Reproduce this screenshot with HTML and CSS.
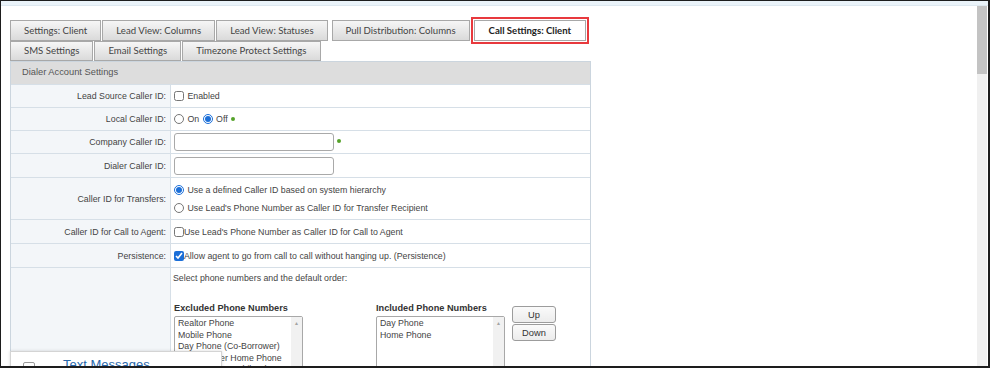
FILE: index.html
```html
<!DOCTYPE html>
<html>
<head>
    <title>Call Settings: Client</title>
    <link rel="stylesheet" href="styles.css">
</head>
<body>
    <div class="window">
        <div class="topbar"></div>
        <div class="viewport">
            <div class="page">
                <div class="tabs first">
                    <div class="tab">Settings: Client</div>
                    <div class="tab">Lead View: Columns</div>
                    <div class="tab">Lead View: Statuses</div>
                    <div class="tab spaced">Pull Distribution: Columns</div>
                    <div class="tab spaced active">Call Settings: Client</div>
                </div>
                <div class="tabs">
                    <div class="tab">SMS Settings</div>
                    <div class="tab">Email Settings</div>
                    <div class="tab">Timezone Protect Settings</div>
                </div>

                <div class="panel">
                    <div class="panel-header">Dialer Account Settings</div>
                    <table class="settings">
                        <tr class="h23">
                            <td class="label">Lead Source Caller ID:</td>
                            <td class="value"><label><input type="checkbox"> Enabled</label></td>
                        </tr>
                        <tr class="h23">
                            <td class="label">Local Caller ID:</td>
                            <td class="value">
                                <label><input type="radio" name="local"> On</label>
                                <label><input type="radio" name="local" checked> Off</label><span class="dot"></span>
                            </td>
                        </tr>
                        <tr class="h23">
                            <td class="label">Company Caller ID:</td>
                            <td class="value"><input type="text" class="field"><span class="dot"></span></td>
                        </tr>
                        <tr class="h24">
                            <td class="label">Dialer Caller ID:</td>
                            <td class="value"><input type="text" class="field"></td>
                        </tr>
                        <tr class="h42">
                            <td class="label">Caller ID for Transfers:</td>
                            <td class="value">
                                <div class="line"><label><input type="radio" name="transfer" checked> Use a defined Caller ID based on system hierarchy</label></div>
                                <div class="line"><label><input type="radio" name="transfer"> Use Lead's Phone Number as Caller ID for Transfer Recipient</label></div>
                            </td>
                        </tr>
                        <tr class="h24">
                            <td class="label">Caller ID for Call to Agent:</td>
                            <td class="value"><label><input type="checkbox" class="tight">Use Lead's Phone Number as Caller ID for Call to Agent</label></td>
                        </tr>
                        <tr class="h24">
                            <td class="label">Persistence:</td>
                            <td class="value"><label><input type="checkbox" class="tight" checked>Allow agent to go from call to call without hanging up. (Persistence)</label></td>
                        </tr>
                        <tr>
                            <td class="label"></td>
                            <td class="value top">
                                <div class="hint">Select phone numbers and the default order:</div>
                                <div class="order">
                                    <div class="list-col">
                                        <div class="list-title">Excluded Phone Numbers</div>
                                        <div class="listbox">
                                            <div class="options">
                                                <div>Realtor Phone</div>
                                                <div>Mobile Phone</div>
                                                <div>Day Phone (Co-Borrower)</div>
                                                <div>Co-Borrower Home Phone</div>
                                                <div>Co-Borrower Mobile Phone</div>
                                            </div>
                                            <div class="list-scroll">&#9650;</div>
                                        </div>
                                    </div>
                                    <div class="list-col included">
                                        <div class="list-title">Included Phone Numbers</div>
                                        <div class="listbox">
                                            <div class="options">
                                                <div>Day Phone</div>
                                                <div>Home Phone</div>
                                            </div>
                                            <div class="list-scroll">&#9650;</div>
                                        </div>
                                    </div>
                                    <div class="order-buttons">
                                        <button>Up</button>
                                        <button>Down</button>
                                    </div>
                                </div>
                            </td>
                        </tr>
                    </table>
                </div>
            </div>
            <div class="scrollbar"><div class="thumb"></div></div>

            <div class="popup">
                <span class="popup-check"></span>
                <span class="popup-title">Text Messages</span>
            </div>
        </div>
    </div>
</body>
</html>
```

FILE: styles.css
```css
html, body {
    margin: 0;
    height: 100%;
    overflow: hidden;
    background: #ffffff;
}

body {
    font-family: "Liberation Sans", Arial, sans-serif;
}

.window {
    box-sizing: border-box;
    width: 990px;
    height: 368px;
    border-style: solid;
    border-color: #1d1d1d;
    border-width: 1px 2px 2px 1px;
    display: flex;
    flex-direction: column;
}

.topbar {
    height: 4px;
    background: #eaf3f9;
    border-bottom: 1px solid #dde8f0;
}

.viewport {
    flex: 1;
    display: flex;
    position: relative;
    overflow: hidden;
}

.page {
    flex: 1;
    padding: 14px 0 0 9px;
}

.scrollbar {
    width: 10px;
    background: #f0f0f0;
    margin-right: 1px;
}

.thumb {
    height: 68px;
    background: #c3c3c3;
}

/* tabs */
.tabs {
    display: flex;
    gap: 1px;
}

.tab {
    box-sizing: border-box;
    height: 20px;
    line-height: 18px;
    padding: 0 13px;
    border: 1px solid #a8a8a8;
    background: linear-gradient(#f6f6f6, #dadada);
    color: #444;
    font-family: Lato, "Open Sans", sans-serif;
    font-size: 9.6px;
    white-space: nowrap;
}

.tabs.first .tab {
    height: 21px;
    line-height: 19px;
}

.tab.spaced {
    margin-left: 3px;
}

.tab.active {
    background: #ffffff;
    color: #222;
    font-weight: bold;
    padding: 0 14px;
    outline: 2px solid #e8393d;
    outline-offset: 1px;
}

/* panel */
.panel {
    width: 581px;
    box-sizing: border-box;
    border: 1px solid #cbd5de;
    border-bottom: none;
}

.panel-header {
    height: 22px;
    line-height: 21px;
    padding-left: 11px;
    background: #dddddd;
    color: #555;
    font-size: 9.3px;
}

.settings {
    width: 100%;
    border-collapse: collapse;
    font-size: 8.8px;
    color: #444;
}

.settings td {
    border-top: 1px solid #d6dfe7;
    padding: 0;
}

.settings .label {
    width: 155px;
    text-align: right;
    padding-right: 4px;
    background: #f3f6f9;
    border-right: 1px solid #d6dfe7;
}

.settings .value {
    padding-left: 2px;
}

.settings .value.top {
    vertical-align: top;
    height: 110px;
}

.h23 { height: 23px; }
.h24 { height: 24px; }
.h42 { height: 42px; }

label {
    white-space: nowrap;
}

input[type="checkbox"],
input[type="radio"] {
    width: 10px;
    height: 10px;
    margin: 0 1px 0 1px;
    vertical-align: -2px;
    accent-color: #1c6fd8;
}

input.tight {
    margin-right: 0;
}

.line {
    height: 18px;
    line-height: 18px;
}

.dot {
    display: inline-block;
    width: 4px;
    height: 4px;
    border-radius: 50%;
    background: #55a22a;
    margin-left: 3px;
    vertical-align: 1px;
}

.field {
    box-sizing: border-box;
    width: 160px;
    height: 18px;
    margin: 0 0 0 1px;
    border: 1px solid #a9a9a9;
    border-radius: 3px;
    vertical-align: middle;
}

/* phone order */
.hint {
    margin-top: 5px;
}

.order {
    display: flex;
    align-items: flex-start;
    margin-top: 20px;
    padding-left: 1px;
}

.list-col {
    width: 129px;
}

.list-col.included {
    margin-left: 73px;
}

.list-title {
    font-weight: bold;
    font-size: 9.2px;
    color: #333;
    margin-bottom: 3px;
}

.listbox {
    display: flex;
    height: 70px;
    border: 1px solid #a8a8a8;
    border-radius: 2px;
}

.options {
    flex: 1;
    padding: 1px 0 0 3px;
    line-height: 11.5px;
    white-space: nowrap;
    overflow: hidden;
}

.list-scroll {
    width: 11px;
    background: #f1f1f1;
    color: #a3a3a3;
    font-size: 5px;
    text-align: center;
    line-height: 12px;
}

.order-buttons {
    display: flex;
    flex-direction: column;
    gap: 1px;
    margin: 3px 0 0 7px;
}

.order-buttons button {
    width: 44px;
    height: 17px;
    padding: 0;
    border: 1px solid #9c9c9c;
    border-radius: 3px;
    background: linear-gradient(#fafafa, #ececec);
    color: #333;
    font-family: "Liberation Sans", Arial, sans-serif;
    font-size: 9.3px;
}

/* overlay popup */
.popup {
    position: absolute;
    left: 9px;
    top: 345px;
    width: 212px;
    height: 30px;
    box-sizing: border-box;
    background: #ffffff;
    border: 1px solid #d4d4d4;
    box-shadow: 0 0 3px rgba(0, 0, 0, 0.15);
    display: flex;
    align-items: flex-start;
    padding: 6px 0 0 12px;
}

.popup-check {
    width: 10px;
    height: 10px;
    border: 1px solid #999;
    border-radius: 2px;
    margin-top: 4px;
}

.popup-title {
    margin-left: 28px;
    color: #2867ab;
    font-size: 13px;
    line-height: 14px;
}
```
